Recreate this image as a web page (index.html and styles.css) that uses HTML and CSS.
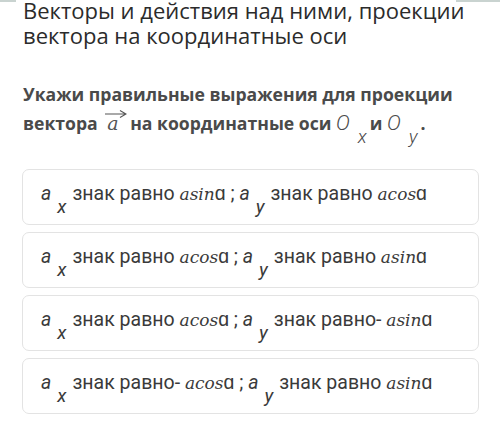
FILE: index.html
```
<!DOCTYPE html>
<html lang="ru">
<head>
    <meta charset="UTF-8">
    <meta name="viewport" content="width=device-width, initial-scale=1.0">
    <title>Векторы</title>
    <link rel="stylesheet" href="styles.css">
</head>
<body>

    <div class="top-bar">
        <span class="tab tab-left"></span>
        <span class="tab tab-right"></span>
    </div>

    <div class="container">
        <h1 class="lesson-title">Векторы и действия над ними, проекции вектора на координатные оси</h1>

        <!-- Текст задания -->
        <p class="question">
            Укажи правильные выражения для проекции вектора
            <span class="vec"><svg class="vec-arrow" width="22" height="8" viewBox="0 0 22 8"><path d="M0 4H20M15 0.5L21 4L15 7.5" fill="none" stroke="#555" stroke-width="1.1"/></svg><span class="vec-letter">a</span></span>
            на координатные оси <span class="mi">O</span><sub class="sub">x</sub>и <span class="mi">O</span><sub class="sub">y</sub>.
        </p>

        <!-- Варианты ответа -->
        <div class="answers">
            <div class="answer">
                <span class="mi">a</span><sub class="sub">x</sub>знак равно <span class="tex">asin</span>ɑ ; <span class="mi">a</span><sub class="sub">y</sub>знак равно <span class="tex">acos</span>ɑ
            </div>
            <div class="answer">
                <span class="mi">a</span><sub class="sub">x</sub>знак равно <span class="tex">acos</span>ɑ ; <span class="mi">a</span><sub class="sub">y</sub>знак равно <span class="tex">asin</span>ɑ
            </div>
            <div class="answer">
                <span class="mi">a</span><sub class="sub">x</sub>знак равно <span class="tex">acos</span>ɑ ; <span class="mi">a</span><sub class="sub">y</sub>знак равно- <span class="tex">asin</span>ɑ
            </div>
            <div class="answer">
                <span class="mi">a</span><sub class="sub">x</sub>знак равно- <span class="tex">acos</span>ɑ ; <span class="mi">a</span><sub class="sub">y</sub>знак равно <span class="tex">asin</span>ɑ
            </div>
        </div>
    </div>

</body>
</html>
```

FILE: styles.css
```
body {
    margin: 0;
    padding: 0;
    background-color: #fff;
    color: #333;
    font-family: "Open Sans", sans-serif;
}

.top-bar {
    height: 0;
    position: relative;
}

.tab {
    position: absolute;
    top: 0;
    height: 2px;
    background-color: #c9d3d0;
}

.tab-left {
    left: 0;
    width: 16px;
}

.tab-right {
    right: 0;
    width: 44px;
}

.container {
    padding: 0 21px 0 22px;
}

.lesson-title {
    margin: -2px 0 0 1px;
    font-size: 22px;
    font-weight: 400;
    line-height: 25px;
    color: #2b2b2b;
}

.question {
    margin: 32px 0 0 1px;
    font-size: 17.6px;
    font-weight: 700;
    line-height: 29px;
    color: #4a4a4a;
}

.vec {
    display: inline-block;
    position: relative;
    margin: 0 7px 0 5px;
    font-family: "DejaVu Serif", serif;
    font-style: italic;
    font-weight: 400;
    font-size: 19px;
    line-height: 1;
    color: #555;
}

.vec-arrow {
    position: absolute;
    left: -2px;
    top: -4px;
}

.mi {
    font-family: Roboto, sans-serif;
    font-style: italic;
    font-weight: 300;
    font-size: 21px;
}

.sub {
    font-family: Roboto, sans-serif;
    font-style: italic;
    font-weight: 400;
    font-size: 19px;
    vertical-align: -13px;
    line-height: 0;
}

.question .sub {
    font-weight: 300;
    margin: 0 3px 0 8px;
}

.answers {
    display: flex;
    flex-direction: column;
    gap: 7px;
    margin-top: 31px;
}

.answer {
    height: 56px;
    box-sizing: border-box;
    padding: 10px 18px 0;
    border: 1px solid #e3e3e3;
    border-radius: 7px;
    font-family: Roboto, sans-serif;
    font-size: 19.5px;
    line-height: 28px;
    color: #3a3a3a;
    white-space: nowrap;
}

.answer .mi {
    font-size: 19.5px;
    font-weight: 400;
}

.answer .sub {
    margin: 0 6px 0 6px;
}

.tex {
    font-family: "DejaVu Serif", serif;
    font-style: italic;
    font-size: 17px;
}
```
